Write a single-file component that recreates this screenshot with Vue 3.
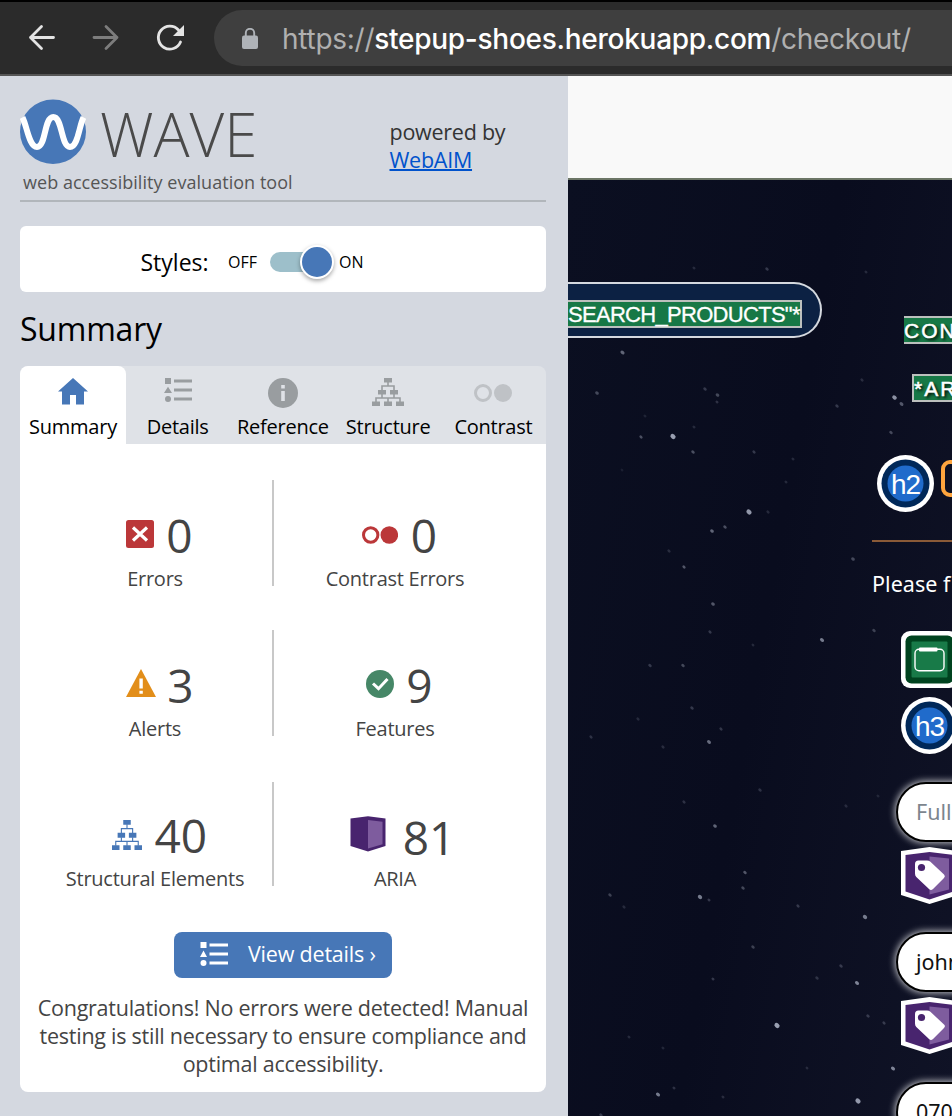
<script setup>
const tabs = [
  { name: 'Summary', icon: 'home' },
  { name: 'Details', icon: 'list' },
  { name: 'Reference', icon: 'info' },
  { name: 'Structure', icon: 'tree' },
  { name: 'Contrast', icon: 'contrast' },
]
const stats = [
  { icon: 'error', value: 0, label: 'Errors' },
  { icon: 'contrast', value: 0, label: 'Contrast Errors' },
  { icon: 'alert', value: 3, label: 'Alerts' },
  { icon: 'feature', value: 9, label: 'Features' },
  { icon: 'tree', value: 40, label: 'Structural Elements' },
  { icon: 'aria', value: 81, label: 'ARIA' },
]
/* x, y, radius, opacity */
const stars = [
  [73, 257, 1.5, .45], [105, 256.5, 2.4, 1], [125, 272, 1.6, .45], [186, 272, 1.5, .3], [181, 332, 2.4, .95],
  [144, 351, 1.7, .6], [157, 347, 1.6, .45], [116, 387, 1.5, .5], [101, 371, 1.5, .22], [145, 424, 1.7, .5],
  [142, 452, 1.5, .3], [185, 465, 1.3, .2], [254, 460, 1.9, .75], [306, 450.5, 1.6, .35], [285, 379, 1.7, .4],
  [82, 485.5, 1.6, .3], [115, 485.5, 1.6, .4], [124, 528, 1.6, .3], [70, 539, 1.5, .2], [23, 557, 1.5, .25],
  [95, 567, 1.5, .22], [153, 549, 1.5, .28], [141, 562, 1.8, .65], [192, 610, 1.6, .25], [116, 622, 1.5, .25],
  [278, 626, 1.5, .2], [147, 646, 1.7, .6], [177, 692.5, 1.6, .5], [175, 708, 1.6, .4], [132, 717, 2, .75],
  [141, 720, 1.4, .3], [42, 715, 1.6, .35], [56, 727, 1.5, .2], [230, 726, 1.5, .3], [297, 737, 2, .75],
  [185, 767, 1.6, .35], [145, 799, 1.4, .3], [273, 786, 1.6, .3], [249, 798, 1.6, .25], [289, 803, 1.9, .8],
  [209, 845.5, 2.4, 1], [300, 836, 1.5, .3], [316, 843, 1.5, .3], [90, 914.5, 1.9, .75], [106, 908, 1.4, .25],
  [155, 917, 1.4, .22], [61, 857, 1.4, .2], [95, 868, 1.4, .18], [325, 888.5, 1.9, .8], [290, 921, 2.4, .95],
  [33, 935, 1.5, .3], [54.500, 172.500, 1.9, .6], [29, 213, 1.7, .4], [137, 209, 1.6, .3], [149.500, 215, 1.7, .4],
  [149, 222, 1.4, .25], [77, 236, 1.4, .15], [126, 247, 1.4, .2], [326.500, 217.500, 2.1, .9], [333.500, 224, 1.8, .5],
  [269, 226, 1.6, .3], [294, 200, 1.5, .22], [323, 252.500, 1.6, .4], [199, 89, 1.6, .3], [298, 92, 1.4, .2],
  [126, 88, 1.4, .2], [218, 302, 1.4, .2], [225, 279, 1.4, .2], [54, 290, 1.3, .12], [200, 332, 1.5, .2],
  [352, 326, 1.6, .3], [239, 888, 1.3, .2], [310, 616, 1.4, .16],
]
</script>

<template>
  <div class="window">
    <header class="toolbar">
      <svg class="nav" viewBox="0 0 28 28"><path d="M25.500 13.500H2.500M13.500 2.500 2.500 13.500l11 11" /></svg>
      <svg class="nav off" viewBox="0 0 28 28"><path d="M2 13.500h23M14 2.500 25 13.500 14 24.500" /></svg>
      <svg class="nav" viewBox="0 0 28 28"><path d="M24.500 18A11.500 11.500 0 1 1 22.500 6" /><path class="solid" d="M28 1v11H17z" /></svg>
      <div class="address">
        <svg class="lock" viewBox="0 0 16 21"><path d="M3.800 9V5a4.200 4.200 0 0 1 8.400 0v4" fill="none" stroke="#afb3b8" stroke-width="1.900" /><rect y="7.500" width="16" height="13.500" rx="2" fill="#afb3b8" /></svg>
        <span class="url">https://<b>stepup-shoes.herokuapp.com</b>/checkout/</span>
      </div>
    </header>

    <main class="body">
      <aside class="wave">
        <div class="brand">
          <div>
            <div class="logo">
              <svg viewBox="0 0 66 65" width="66" height="65">
                <ellipse cx="33" cy="32.800" rx="33" ry="32.200" fill="#4777b7" />
                <path d="M2.500 18.500C7 27 9 48 17 48C26 48 24 18 33.300 18C42.500 18 41 48 50 48C58 48 59 27 63.500 18.500" fill="none" stroke="#fff" stroke-width="6" />
              </svg>
              <span class="wordmark">WAVE</span>
            </div>
            <div class="tagline">web accessibility evaluation tool</div>
          </div>
          <div class="powered">powered by<br><a>WebAIM</a></div>
        </div>

        <div class="styles">
          <span class="styles-label">Styles:</span>
          <span class="state s-off">OFF</span>
          <span class="track"><i class="knob"></i></span>
          <span class="state s-on">ON</span>
        </div>

        <h1>Summary</h1>

        <nav class="tabs">
          <div v-for="(t, i) in tabs" :key="t.name" class="tab" :class="{ active: i === 0 }">
            <div class="tab-icon">
              <svg v-if="t.icon === 'home'" class="home" width="30" height="27" viewBox="0 0 30 27"><path fill="#4777b7" d="M15 0 30 13.500H26V26.500H18V17H12V26.500H4V13.500H0z" /></svg>
              <svg v-else-if="t.icon === 'list'" class="up" width="28" height="24" viewBox="0 0 28 24"><g fill="#999da0"><path d="M1 0h6v6H1zM4 8.700 8 15H0zM10 1.500h18v3H10zM10 10.500h18v3H10zM10 19.500h18v3H10z" /><circle cx="4" cy="21" r="3" /></g></svg>
              <svg v-else-if="t.icon === 'info'" width="30" height="30" viewBox="0 0 30 30"><circle cx="15" cy="15" r="15" fill="#999da0" /><path fill="#dfe2e7" d="M13.200 7h3.600v3.600h-3.600zM13.200 13h3.600v10h-3.600z" /></svg>
              <svg v-else-if="t.icon === 'tree'" class="tree-icon" width="32" height="28" viewBox="0 0 32 28"><path fill="#999da0" d="M12 0h8v4.500h-8zM6 12h8v4.500H6zM18 12h8v4.500h-8zM0 23.500h8V28H0zM12 23.500h8V28h-8zM24 23.500h8V28h-8z" /><path fill="none" stroke="#999da0" stroke-width="1.600" d="M16 4v4M10 12.500V8h12v4.500M10 16v4M22 16v4M4 24v-4h24v4M16 20v4" /></svg>
              <svg v-else width="38" height="18" viewBox="0 0 38 18"><circle cx="9" cy="9" r="7.500" fill="none" stroke="#bfc2c6" stroke-width="3" /><circle cx="29" cy="9" r="9" fill="#bfc2c6" /></svg>
            </div>
            <span class="tab-name">{{ t.name }}</span>
          </div>
        </nav>

        <section class="panel">
          <div class="stats">
            <div v-for="s in stats" :key="s.label" class="stat" :class="s.icon">
              <div class="figure">
                <svg v-if="s.icon === 'error'" class="ico" width="28" height="28" viewBox="0 0 28 28"><rect width="28" height="28" rx="2.500" fill="#bb3739" /><path d="M7 7.500 21 20.500M21 7.500 7 20.500" stroke="#fff" stroke-width="3.200" /></svg>
                <svg v-else-if="s.icon === 'contrast'" class="ico" width="36" height="18" viewBox="0 0 36 18"><circle cx="8.700" cy="9" r="7.200" fill="none" stroke="#bb3739" stroke-width="3" /><circle cx="27.300" cy="9" r="8.800" fill="#bb3739" /></svg>
                <svg v-else-if="s.icon === 'alert'" class="ico" width="30" height="28" viewBox="0 0 30 28"><path d="M15 0 30 28H0z" fill="#e28e1a" /><path d="M13.400 9.500h3.400v10h-3.400zM13.400 21.800h3.400v3h-3.400z" fill="#fff" /></svg>
                <svg v-else-if="s.icon === 'feature'" class="ico" width="28" height="28" viewBox="0 0 28 28"><circle cx="14" cy="14" r="14" fill="#468767" /><path d="m7 13.500 5.500 5.200L21.500 9" fill="none" stroke="#fff" stroke-width="3" /></svg>
                <svg v-else-if="s.icon === 'tree'" class="ico" width="30" height="30" viewBox="0 0 32 28" preserveAspectRatio="none"><path fill="#4777b7" d="M12 0h8v4.500h-8zM6 12h8v4.500H6zM18 12h8v4.500h-8zM0 23.500h8V28H0zM12 23.500h8V28h-8zM24 23.500h8V28h-8z" /><path fill="none" stroke="#4777b7" stroke-width="1.200" d="M16 4v4M10 12.500V8h12v4.500M10 16v4M22 16v4M4 24v-4h24v4M16 20v4" /></svg>
                <svg v-else class="ico" width="36" height="36" viewBox="0 0 36 36"><path d="M.5 2.500 18 .3 35.500 2.500V30L18 35.500.5 30z" fill="#48246e" /><path d="M18 4l14.500 1.800v22.500L18 32.500z" fill="#7e5c9e" /></svg>
                <span class="value">{{ s.value }}</span>
              </div>
              <div class="stat-label">{{ s.label }}</div>
            </div>
          </div>
          <button class="details">
            <svg width="28" height="24" viewBox="0 0 28 24"><g fill="#fff"><path d="M.500 0h6v6h-6zM3.500 8.500 7 15H0zM9.500 1.500H28v3H9.500zM9.500 10.500H28v3H9.500zM9.500 19.500H28v3H9.500z" /><circle cx="3.500" cy="21" r="3" /></g></svg>
            <span>View details ›</span>
          </button>
          <p>Congratulations! No errors were detected! Manual<br>testing is still necessary to ensure compliance and<br>optimal accessibility.</p>
        </section>
      </aside>

      <section class="site">
        <div class="site-top"></div>
        <div class="night">
          <svg class="sky" viewBox="0 0 384 936" width="384" height="936">
            <ellipse v-for="(s, i) in stars" :key="i" :cx="s[0]" :cy="s[1]" :rx="s[2] * 1.2" :ry="s[2] * .9" :opacity="s[3] * .75" :transform="`rotate(40 ${s[0]} ${s[1]})`" fill="#c9d0e2" />
          </svg>
          <div class="search"><span class="tag">SEARCH_PRODUCTS"*</span></div>
          <div class="column">
            <div class="tag spaced con">CON</div>
            <div class="tag spaced ar">*AR</div>
            <div class="heading">
              <svg class="badge" viewBox="0 0 57 57"><circle cx="28.500" cy="28.500" r="28.500" fill="#fff" /><circle cx="28.500" cy="28.500" r="24" fill="#002859" /><circle cx="28.500" cy="28.500" r="18" fill="#206bcb" /><text x="28.500" y="38.500">h2</text></svg>
              <span class="initial"></span>
            </div>
            <hr>
            <div class="lead">Please f</div>
            <svg class="badge form" viewBox="0 0 57 57"><rect width="57" height="57" rx="9" fill="#fff" /><rect x="4.500" y="4.500" width="48" height="48" rx="6" fill="#00431f" /><rect x="10.500" y="10.500" width="36" height="36" rx="1" fill="#187a48" /><rect x="14" y="18.300" width="29" height="21.500" rx="4" fill="none" stroke="#fff" stroke-width="1.400" /><rect x="18" y="16.500" width="18.500" height="4" rx="1" fill="#fff" /></svg>
            <svg class="badge h3" viewBox="0 0 57 57"><circle cx="28.500" cy="28.500" r="28.500" fill="#fff" /><circle cx="28.500" cy="28.500" r="24" fill="#002859" /><circle cx="28.500" cy="28.500" r="18" fill="#206bcb" /><text x="28.500" y="38.500">h3</text></svg>
            <template v-for="f in ['Full', 'john', '0707']" :key="f">
              <div class="field" :class="{ hint: f === 'Full' }">{{ f }}</div>
              <svg class="badge shield" viewBox="0 0 57 57"><path d="M0 4 28.500 0 57 4V48L28.500 57 0 48z" fill="#fff" /><path d="M4.500 8 28.500 5 52.500 8V44.500L28.500 52.500 4.500 44.500z" fill="#48246e" /><path d="M28.500 9.500 48 11.500V42.500L28.500 47.500z" fill="#7e5c9e" /><path d="M14 17q0-3.500 3.500-3.500H26q2 0 3.400 1.300L43 27.500q1.800 1.700 0 3.400L32 42q-2 2-4 0L15.300 30Q14 28.600 14 26.500z" fill="#fff" /><circle cx="20.500" cy="20.500" r="3.600" fill="#48246e" /></svg>
            </template>
          </div>
        </div>
      </section>
    </main>
  </div>
</template>

<style>
html, body { margin: 0; overflow: hidden; }
</style>

<style scoped>
* { box-sizing: border-box; }
.window { width: 952px; height: 1116px; overflow: hidden; display: flex; flex-direction: column; font-family: "Open Sans", "Noto Sans", sans-serif; color: #000; }
.toolbar { height: 76px; flex: none; background: #2b2b2b; border-top: 2px solid #000; border-bottom: 2px solid #555; display: flex; align-items: center; padding-left: 28px; }
.nav { width: 28px; height: 28px; flex: none; margin-right: 36px; }
.nav path { fill: none; stroke: #e4e4e4; stroke-width: 2.800; stroke-linecap: round; stroke-linejoin: round; }
.nav path.solid { fill: #e4e4e4; stroke: none; }
.nav.off path { stroke: #7d7d7d; }
.address { height: 56px; flex: 1; margin-left: -6px; border-radius: 28px 0 0 28px; background: #3f3f3f; display: flex; align-items: center; padding-left: 28px; }
.lock { width: 16px; height: 21px; flex: none; }
.url { margin: 1px 0 0 24px; font: 400 28px/32px Inter, sans-serif; color: #b0b0b0; white-space: nowrap; letter-spacing: -0.270px; }
.url b { font-weight: 500; color: #fff; }
.body { flex: 1; display: flex; min-height: 0; }
.wave { width: 568px; flex: none; background: #d4d8e0; padding: 23px 22px 0 20px; }
.brand { height: 103px; border-bottom: 2px solid #b1b6bb; display: flex; }
.brand > div:first-child { width: 369px; }
.logo { display: flex; height: 65px; }
.wordmark { margin-left: 14px; padding-top: 5px; font-size: 60px; font-weight: 300; line-height: 60px; color: #4a4a4a; }
.tagline { margin: 6px 0 0 3px; font-size: 18px; line-height: 24px; color: #555; white-space: nowrap; letter-spacing: .04px; }
.powered { margin-top: 19px; font-size: 21.500px; line-height: 28px; color: #333; letter-spacing: -.25px; padding-left: .5px; }
.powered a { color: #0052cc; text-decoration: underline; text-decoration-thickness: 2px; }
.styles { height: 66px; margin-top: 24px; border-radius: 6px; background: #fff; display: flex; align-items: center; padding: 5px 0 0 120.500px; white-space: nowrap; }
.styles-label { width: 87.500px; font-size: 23px; }
.state { font-size: 16px; }
.s-off { width: 42px; }
.track { width: 60px; height: 20px; border-radius: 10px; background: #9dbfca; display: flex; align-items: center; justify-content: flex-end; }
.knob { width: 34px; height: 34px; flex: none; margin-right: -4px; border-radius: 50%; background: #4777b7; border: 2px solid #fff; box-shadow: 0 2px 4px rgba(0, 0, 0, .35); }
.s-on { margin-left: 9px; }
h1 { margin: 12px 0 0; height: 62px; font-size: 32px; font-weight: 400; line-height: 49px; letter-spacing: -.2px; }
.tabs { height: 78px; display: flex; border-radius: 8px 8px 0 0; background: #dfe2e7; }
.tab { flex: 1 1 0; min-width: 0; display: flex; flex-direction: column; align-items: center; border-radius: 8px 8px 0 0; }
.tab.active { flex: 0 0 106px; margin-right: -1px; background: #fff; }
.tab-icon { height: 54px; display: flex; align-items: center; }
.tab-icon svg { display: block; }
.tab-icon .up { margin-top: -6px; }
.tab-icon .home { margin-top: -3px; }
.tab-icon .tree-icon { margin-top: -2px; }
.tab-name { font-size: 20px; line-height: 14px; white-space: nowrap; letter-spacing: -.25px; }
.panel { height: 648px; background: #fff; border-radius: 0 0 8px 8px; padding-top: 36px; }
.stats { display: grid; grid-template-columns: 238px 242px; grid-auto-rows: 106px; row-gap: 44px; padding-left: 16px; color: #444; }
.stat { display: flex; flex-direction: column; align-items: center; }
.stat:nth-child(odd) { border-right: 2px solid #c8c8c8; padding-left: 2px; }
.stat:nth-child(5) { margin-top: 2px; }
.stat:nth-child(5) .figure { margin-top: -2px; }
.figure { height: 106px; flex: none; margin-bottom: -20px; display: flex; align-items: center; padding: 3px 0 0 10px; }
.ico { display: block; margin: -4px 11px 0 0; }
.error .ico, .feature .ico { margin: -2px 12px 0 0; }
.error .figure, .feature .figure { padding-left: 9px; }
.contrast .ico { margin: 0 13px 0 0; }
.contrast .figure { padding-left: 9px; }
.tree .figure { padding-left: 9px; }
.tree .ico { margin: 0 12.500px 0 0; }
.aria .figure { padding: 7px 0 0 15px; }
.aria .ico { margin: -6px 17px 0 0; }
.value { font-size: 46px; line-height: 50px; }
.stat-label { font-size: 20px; line-height: 26px; white-space: nowrap; letter-spacing: -.25px; }
.details { width: 218px; height: 46px; margin: 46px 0 0 154px; padding: 0 0 2px 26px; border: 0; border-radius: 8px; background: #4777b7; color: #fff; display: flex; align-items: center; font: 400 21.500px/30px "Open Sans", sans-serif; letter-spacing: -.2px; white-space: nowrap; }
.details span { margin-left: 20px; }
p { margin: 16px 0 0; text-align: center; font-size: 21.500px; line-height: 28px; color: #444; white-space: nowrap; letter-spacing: -.25px; }

.site { width: 384px; display: flex; flex-direction: column; }
.site-top { height: 104px; flex: none; background: #f9f9f9; border-bottom: 2px solid #6c7666; }
.night { flex: 1; position: relative; display: flex; background: linear-gradient(100deg, #0b0f21 0%, #090c1e 50%, #101326 100%); overflow: hidden; }
.sky { position: absolute; left: 0; top: 0; }
.search { position: relative; width: 254px; height: 56px; flex: none; margin-top: 102px; border: 2px solid #d5d9df; border-left: 0; border-radius: 0 28px 28px 0; background: #0c2143; display: flex; align-items: center; padding: 8px 18px 0 0; }
.tag { height: 28px; background: #177846; border: 2px solid #bcc0bd; color: #fff; font: 400 22px/25px "Liberation Sans", Arial, sans-serif; white-space: nowrap; }
.search .tag { width: 234px; border-left: 0; letter-spacing: -.7px; -webkit-text-stroke: .3px #fff; }
.column { position: relative; width: 80px; margin-left: 50px; padding-top: 136px; display: flex; flex-direction: column; overflow: hidden; }
.column > * { flex: none; }
.spaced { letter-spacing: 2px; font-size: 21px; -webkit-text-stroke: .5px #fff; text-shadow: 2px 2px 3px #000; overflow: hidden; }
.con { margin-left: 32px; border-left: 0; border-right: 0; }
.ar { margin: 30px 0 0 40px; border-right: 0; }
.badge { width: 57px; height: 57px; display: block; flex: none; }
.badge text { font: 400 28px "Liberation Sans", sans-serif; fill: #fff; text-anchor: middle; letter-spacing: -1px; }
.heading { margin: 52.500px 0 0 4.500px; display: flex; height: 57px; }
.initial { margin: 5px 0 0 7px; width: 30px; height: 37px; flex: none; border: 4px solid #ffa53e; border-radius: 9px; }
hr { width: 80px; height: 2px; margin: 28.500px 0 0; border: 0; background: #8a5a37; }
.lead { margin-top: 26px; height: 32px; font: 400 21.500px/32px "Noto Sans", sans-serif; color: #fff; letter-spacing: .05px; white-space: nowrap; }
.form { margin: 30.500px 0 0 28.500px; }
.h3 { margin: 9px 0 28.500px 28.500px; }
.field { width: 200px; height: 60px; margin-left: 24px; border: 2px solid #000; border-radius: 30px; background: #fff; box-shadow: 0 0 7px 1px rgba(255, 255, 255, .75); padding-left: 18px; font: 400 21.500px/56px "Noto Sans", sans-serif; color: #111; white-space: nowrap; }
.hint { color: #7c858e; }
.shield { margin: 4.500px 0 28.500px 28.500px; }
</style>
